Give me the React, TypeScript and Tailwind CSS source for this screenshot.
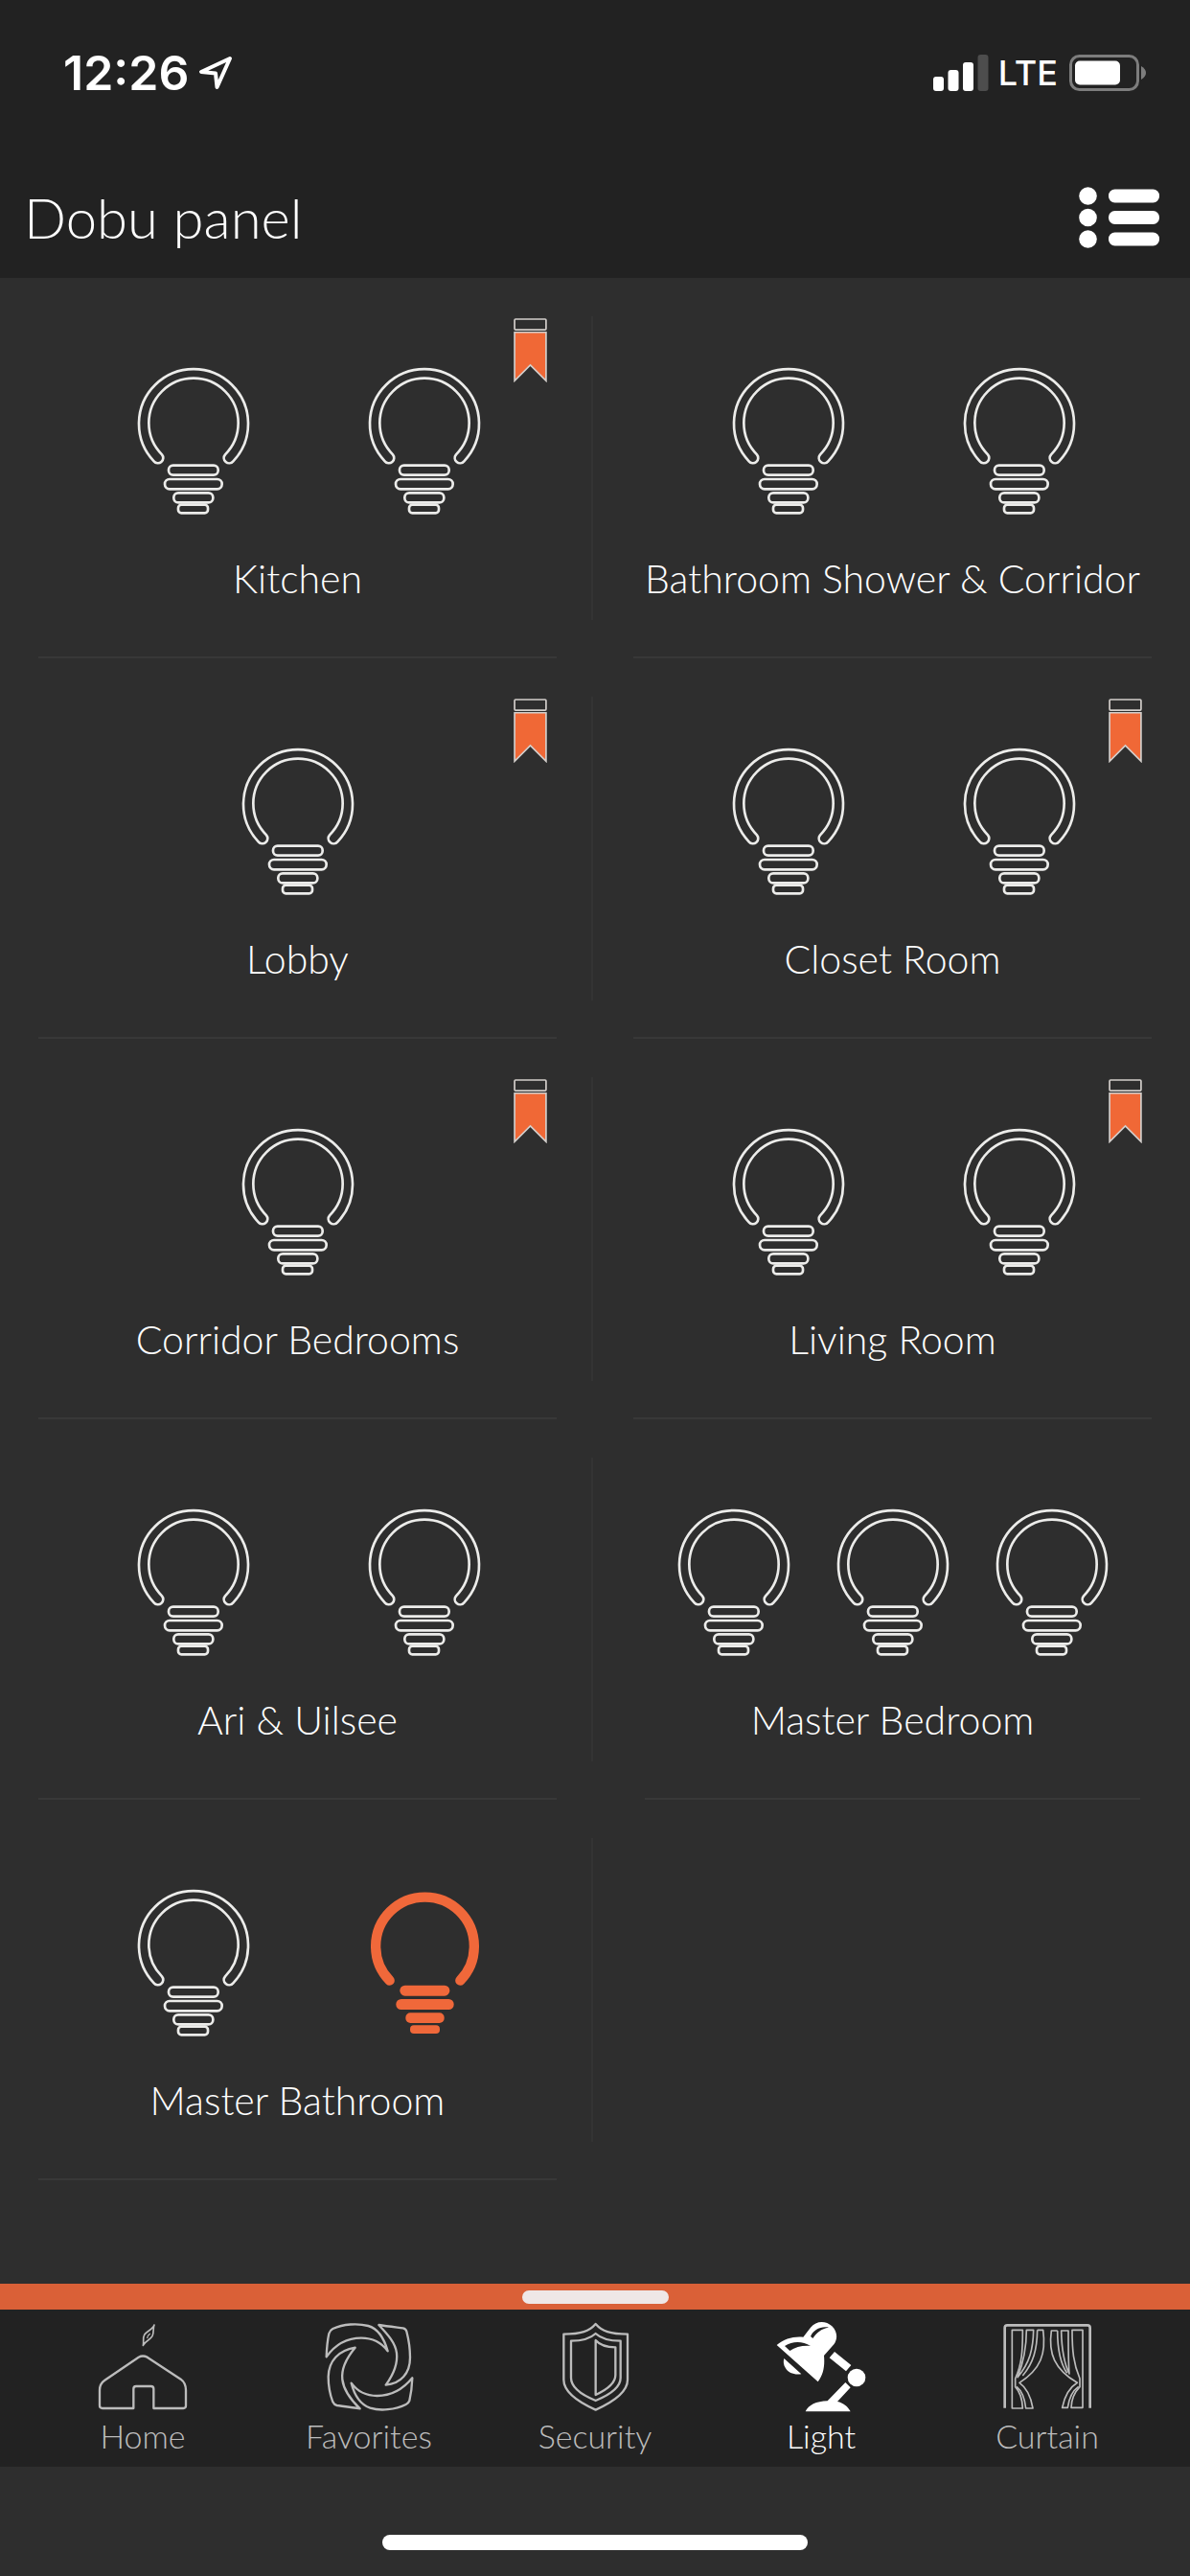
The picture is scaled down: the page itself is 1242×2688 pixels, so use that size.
import { useState } from 'react';
import type { ReactNode } from 'react';
import { clsx } from 'clsx';

type Room = {
  name: string;
  bulbs: boolean[];
  bookmarked?: boolean;
};

const rooms: Room[] = [
  { name: 'Kitchen', bulbs: [false, false], bookmarked: true },
  { name: 'Bathroom Shower & Corridor', bulbs: [false, false] },
  { name: 'Lobby', bulbs: [false], bookmarked: true },
  { name: 'Closet Room', bulbs: [false, false], bookmarked: true },
  { name: 'Corridor Bedrooms', bulbs: [false], bookmarked: true },
  { name: 'Living Room', bulbs: [false, false], bookmarked: true },
  { name: 'Ari & Uilsee', bulbs: [false, false] },
  { name: 'Master Bedroom', bulbs: [false, false, false] },
  { name: 'Master Bathroom', bulbs: [false, true] },
];

function Bulb({ on }: { on: boolean }) {
  if (on) {
    return (
      <svg viewBox="40 40 354 462" className="h-[154px] w-[118px]" aria-hidden="true">
        <path d="M108 327A154 154 0 1 1 329 327" fill="none" stroke="#f0683a" strokeWidth="31" strokeLinecap="round" />
        <g fill="#f0683a">
          <rect x="140" y="342" width="156" height="33" rx="16" />
          <rect x="128" y="385" width="181" height="33" rx="16" />
          <rect x="158" y="428" width="121" height="32" rx="15" />
          <rect x="172" y="467" width="93" height="26" rx="12" />
        </g>
      </svg>
    );
  }
  return (
    <svg viewBox="40 40 354 462" className="h-[154px] w-[118px]" fill="none" stroke="#ececea" strokeWidth="8" aria-hidden="true">
      <path d="M93 335A171 171 0 1 1 341 335A16 16 0 0 1 316 314A140 140 0 1 0 118 314A16 16 0 0 1 93 335Z" />
      <rect x="139" y="348" width="155" height="30" rx="14" />
      <rect x="127" y="391" width="179" height="31" rx="15" />
      <rect x="155" y="434" width="123" height="30" rx="14" />
      <rect x="169" y="471" width="93" height="26" rx="10" />
    </svg>
  );
}

function Bookmark() {
  return (
    <svg viewBox="44 34 104 200" className="h-[67px] w-[35px]" stroke="#d4cfcc" strokeWidth="5" aria-hidden="true">
      <rect x="47" y="37" width="98" height="33" rx="3" fill="none" />
      <path d="M47 78H145V229L96 180L47 229Z" fill="#f06836" />
    </svg>
  );
}

function RoomCell({ room, left }: { room: Room; left: boolean }) {
  const count = room.bulbs.length;
  return (
    <button className="relative flex h-[397px] flex-col items-center pt-[93px]">
      <span className={clsx('flex', count === 2 && 'gap-[123px] pl-6', count === 3 && 'gap-12')}>
        {room.bulbs.map((on, i) => (
          <Bulb key={i} on={on} />
        ))}
      </span>
      <span className="mt-[43px] text-[41px] leading-[48px] whitespace-nowrap">{room.name}</span>
      {room.bookmarked && (
        <span className="absolute top-[42px] right-[50px]">
          <Bookmark />
        </span>
      )}
      <span className={clsx('absolute bottom-0 h-[2px] bg-[#383838]', count === 3 ? 'inset-x-[52px]' : 'inset-x-10')} />
      {left && <span className="absolute top-10 right-[2px] bottom-10 w-[2px] bg-[#343434]" />}
    </button>
  );
}

function TabIcon({ viewBox, children }: { viewBox: string; children: ReactNode }) {
  return (
    <svg
      viewBox={viewBox}
      className="size-24"
      fill="none"
      stroke="currentColor"
      strokeWidth="7"
      strokeLinejoin="round"
      aria-hidden="true"
    >
      {children}
    </svg>
  );
}

const tabs = [
  {
    name: 'Home',
    icon: (
      <TabIcon viewBox="123 156 288 288">
        <path d="M132 372Q132 352 148 341L254 269Q267 262 281 269L386 338Q402 350 402 372V421Q402 429 394 429H301V368Q301 360 293 360H246Q238 360 238 368V429H141Q132 429 132 421Z" />
        <path d="M303 168C299 182 280 187 272 199C266 209 271 220 268 232C274 218 290 216 297 203C303 191 298 180 303 168Z" strokeWidth="5" />
        <path d="M290 195Q281 202 281 210" strokeWidth="4" />
      </TabIcon>
    ),
  },
  {
    name: 'Favorites',
    icon: (
      <TabIcon viewBox="831 156 288 288">
        <path d="M842 268C843 240 846 213 850 195Q853 185 862 180C895 165 940 162 973 171C1005 180 1022 208 1034 250C1015 224 987 209 951 209C905 209 870 229 842 268Z" />
        <path d="M1006 168C1030 172 1058 175 1082 178Q1091 180 1093 188C1100 215 1104 243 1104 270C1104 320 1075 352 1028 356C1052 323 1066 290 1062 256C1058 224 1034 198 1006 168Z" />
        <path d="M1111 334C1110 360 1106 388 1102 405Q1099 413 1091 417C1058 434 1010 438 979 428C946 416 930 390 920 350C938 375 965 390 1001 390C1045 390 1080 372 1111 334Z" />
        <path d="M947 430C922 427 896 423 875 420Q866 418 862 409C852 383 848 350 848 330C849 280 880 248 932 239C902 275 888 308 892 339C896 373 918 402 947 430Z" />
      </TabIcon>
    ),
  },
  {
    name: 'Security',
    icon: (
      <TabIcon viewBox="99 156 288 288">
        <path d="M245 165C225 188 200 197 145 197V340C145 382 196 412 245 434C294 412 345 382 345 340V197C290 197 265 188 245 165Z" />
        <path d="M245 195C228 211 207 218 168 218V334C168 366 203 388 245 405C287 388 323 366 323 334V218C283 218 262 211 245 195Z" />
        <path d="M245 216V387C278 372 307 352 307 325V238C278 238 260 233 245 216Z" />
      </TabIcon>
    ),
  },
  {
    name: 'Light',
    icon: (
      <TabIcon viewBox="806 156 288 288">
        <g fill="currentColor" stroke="none">
          <path d="M811 231C835 211 864 203 894 206L917 176C934 155 964 153 984 172C1002 190 1002 212 990 229L959 264C962 297 957 324 940 346Z" />
          <path d="M834 273L888 322C866 325 848 319 839 304C832 293 831 283 834 273Z" />
          <path d="M992 252L1044 294L1028 313L976 271Z" />
          <circle cx="1061" cy="333" r="28" />
          <path d="M1026 348L1042 364L1001 408C1019 412 1034 423 1042 439H901C910 419 935 407 970 406Z" />
        </g>
        <g fill="#222222" stroke="none">
          <path d="M836 234C862 218 892 219 917 234C892 232 870 237 852 249Z" />
          <path d="M917 204C925 185 948 171 974 176C950 180 936 192 924 210Z" />
        </g>
      </TabIcon>
    ),
  },
  {
    name: 'Curtain',
    icon: (
      <TabIcon viewBox="314 156 288 288">
        <path d="M325 428V177Q325 169 333 169H584Q592 169 592 177V428" strokeWidth="8" />
        <g strokeWidth="5">
          <path d="M348 184H381C381 248 379 290 358 336V362C375 380 380 402 381 429H348Z" />
          <path d="M393 184H415C414 242 404 286 365 332C382 290 393 248 393 184Z" />
          <path d="M427 184H445C455 258 438 306 371 349C394 365 407 393 413 429H391C388 399 378 374 362 361" />
          <path d="M427 184C426 245 415 287 381 327" />
          <path d="M569 184H536C536 248 540 290 560 336V362C542 380 534 402 533 427H569Z" />
          <path d="M524 186H502C503 242 510 286 527 321C524 290 524 248 524 186Z" />
          <path d="M490 186H471C461 258 480 306 552 349C526 365 512 393 505 427H522C526 399 537 374 556 361" />
          <path d="M490 186C490 245 498 287 520 319" />
        </g>
      </TabIcon>
    ),
  },
];

function StatusBar() {
  return (
    <div className="flex h-[152px] items-center justify-between pr-[46px] pl-[66px] font-['Inter',sans-serif] text-white">
      <div className="flex items-center gap-[10px]">
        <span className="text-[50px] leading-[60px] font-semibold">12:26</span>
        <svg viewBox="0 0 36 36" className="size-9" fill="none" stroke="currentColor" strokeWidth="4" strokeLinejoin="round" aria-hidden="true">
          <path d="M33 3L3 17L18 18.500L19.500 33Z" />
        </svg>
      </div>
      <div className="flex items-center">
        <svg viewBox="0 0 58 38" className="h-[38px] w-[58px]" fill="currentColor" aria-hidden="true">
          <rect x="0" y="23" width="11" height="15" rx="3" />
          <rect x="15.500" y="16" width="11" height="22" rx="3" />
          <rect x="31" y="8" width="11" height="30" rx="3" />
          <rect x="46.500" y="0" width="11" height="38" rx="3" fill="#4d4d4d" />
        </svg>
        <span className="ml-[10px] text-[36px] leading-[48px] font-medium">LTE</span>
        <svg viewBox="0 0 80 38" className="ml-3 h-[38px] w-[80px]" aria-hidden="true">
          <rect x="1.500" y="1.500" width="70" height="35" rx="9" fill="none" stroke="#7d7d7d" strokeWidth="3" />
          <rect x="6" y="6.500" width="47" height="25" rx="5" fill="#ffffff" />
          <path d="M75 12Q80 15 80 19T75 26Z" fill="#7d7d7d" />
        </svg>
      </div>
    </div>
  );
}

export default function App() {
  const [active, setActive] = useState('Light');

  return (
    <div className="flex min-h-screen flex-col bg-[#2e2e2e] font-['Lato',sans-serif] font-light text-white">
      <header className="bg-[#222222]">
        <StatusBar />
        <div className="flex h-[138px] items-center justify-between pt-3 pr-8 pl-[25px]">
          <h1 className="text-[58px] leading-[68px]">Dobu panel</h1>
          <button aria-label="Room list">
            <svg viewBox="0 0 84 64" className="h-16 w-[84px]" fill="#ffffff" aria-hidden="true">
              {[0, 22.5, 45].map((y) => (
                <g key={y}>
                  <circle cx="9.500" cy={y + 9.5} r="9.300" />
                  <rect x="31" y={y + 2.5} width="53" height="14" rx="6.500" />
                </g>
              ))}
            </svg>
          </button>
        </div>
      </header>

      <main className="grid flex-1 grid-cols-2 content-start">
        {rooms.map((room, i) => (
          <RoomCell key={room.name} room={room} left={i % 2 === 0} />
        ))}
      </main>

      {/* Pull-up handle */}
      <div className="flex h-[27px] items-center justify-center bg-[#da6037]">
        <div className="h-[14px] w-[153px] rounded-full bg-[#efe7e6]" />
      </div>

      <nav className="grid h-[164px] grid-cols-5 bg-[#222222] px-[31px]">
        {tabs.map(({ name, icon }) => (
          <button
            key={name}
            onClick={() => setActive(name)}
            className={clsx('flex flex-col items-center pt-3', active === name ? 'text-white' : 'text-[#bcbcbc]')}
          >
            {icon}
            <span className="mt-1 text-[34px] leading-10">{name}</span>
          </button>
        ))}
      </nav>

      {/* Home indicator */}
      <div className="flex h-[114px] items-end justify-center pb-[27px]">
        <div className="h-4 w-[444px] rounded-full bg-white" />
      </div>
    </div>
  );
}
